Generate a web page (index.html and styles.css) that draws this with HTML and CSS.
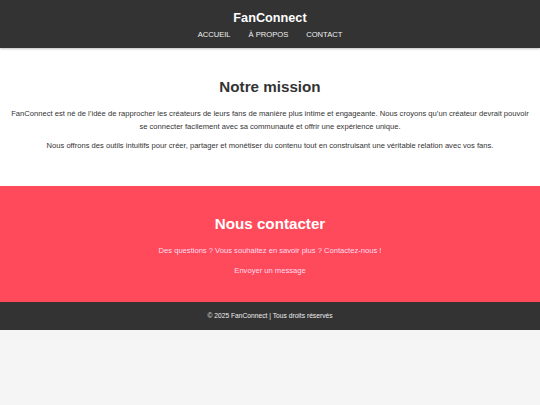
FILE: index.html
```html
<!DOCTYPE html>
<html lang="fr">
<head>
<meta charset="utf-8">
<title>FanConnect</title>
<link rel="stylesheet" href="styles.css">
</head>
<body>
<header class="site-header">
  <div class="brand">FanConnect</div>
  <nav class="nav">
    <a href="#">ACCUEIL</a>
    <a href="#">À PROPOS</a>
    <a href="#">CONTACT</a>
  </nav>
</header>
<main>
  <section class="mission">
    <h2 class="mission-title">Notre mission</h2>
    <p class="mission-text">FanConnect est né de l’idée de rapprocher les créateurs de leurs fans de manière plus intime et engageante. Nous croyons qu’un créateur devrait pouvoir se connecter facilement avec sa communauté et offrir une expérience unique.</p>
    <p class="mission-text">Nous offrons des outils intuitifs pour créer, partager et monétiser du contenu tout en construisant une véritable relation avec vos fans.</p>
  </section>
  <section class="contact">
    <h2 class="contact-title">Nous contacter</h2>
    <p class="contact-text">Des questions ? Vous souhaitez en savoir plus ? Contactez-nous !</p>
    <a class="contact-link" href="#">Envoyer un message</a>
  </section>
</main>
<footer class="site-footer">© 2025 FanConnect | Tous droits réservés</footer>
</body>
</html>
```
FILE: styles.css
```css
html, body {
  margin: 0;
  padding: 0;
}
body {
  font-family: "Liberation Sans", Arial, sans-serif;
  background: #f5f5f5;
  color: #333;
}
.site-header {
  background: #333;
  color: #fff;
  height: 48px;
  display: flex;
  flex-direction: column;
  align-items: center;
  padding-top: 9.5px;
  box-sizing: border-box;
  box-shadow: 0 1px 2px rgba(0,0,0,0.25);
  position: relative;
}
.brand {
  font-size: 12.7px;
  font-weight: bold;
  line-height: 16px;
}
.nav {
  display: flex;
  gap: 18px;
  margin-top: 4px;
}
.nav a {
  color: #f0f0f0;
  text-decoration: none;
  font-size: 7.6px;
  line-height: 10px;
}
.mission {
  background: #fff;
  text-align: center;
  padding: 29.5px 10px 34.5px;
}
.mission-title {
  margin: 0 0 11px;
  font-size: 15.2px;
  line-height: 18px;
  color: #333;
}
.mission-text {
  margin: 0 0 6px;
  font-size: 7.6px;
  line-height: 13px;
  color: #333;
}
.mission-text:last-child {
  margin-bottom: 0;
}
.contact {
  background: #ff4a5b;
  color: #fff;
  text-align: center;
  padding: 29px 10px 25px;
  display: flex;
  flex-direction: column;
  align-items: center;
}
.contact-title {
  margin: 0 0 12px;
  font-size: 15.2px;
  line-height: 18px;
}
.contact-text {
  margin: 0 0 8px;
  font-size: 7.6px;
  line-height: 12px;
  color: #fde;
}
.contact-link {
  color: #fde;
  text-decoration: none;
  font-size: 7.6px;
  line-height: 12px;
}
.site-footer {
  background: #333;
  color: #eee;
  text-align: center;
  font-size: 6.7px;
  line-height: 28px;
  height: 28px;
}
```
